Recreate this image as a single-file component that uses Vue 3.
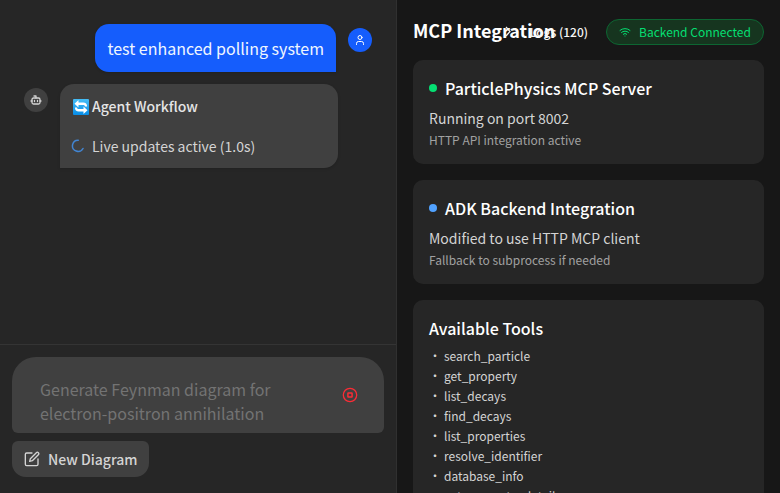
<script setup>
const servers = [
  { title: 'ParticlePhysics MCP Server', detail: 'Running on port 8002', note: 'HTTP API integration active', tone: 'green' },
  { title: 'ADK Backend Integration', detail: 'Modified to use HTTP MCP client', note: 'Fallback to subprocess if needed', tone: 'blue' },
]
const tools = ['search_particle', 'get_property', 'list_decays', 'find_decays', 'list_properties', 'resolve_identifier', 'database_info', 'get_property_details']
</script>

<template>
  <div class="app">
    <section class="chat">
      <div class="messages">
        <div class="row user">
          <div class="bubble mine">test enhanced polling system</div>
          <div class="avatar blue">
            <svg width="12" height="12" viewBox="0 0 24 24" fill="none" stroke="currentColor" stroke-width="2" stroke-linecap="round"><circle cx="12" cy="7" r="4" /><path d="M5 21v-2a4 4 0 0 1 4-4h6a4 4 0 0 1 4 4v2" /></svg>
          </div>
        </div>
        <div class="row agent">
          <div class="avatar">
            <svg width="12" height="12" viewBox="0 0 24 24" fill="none" stroke="currentColor" stroke-width="2.6" stroke-linecap="round" stroke-linejoin="round"><path d="M12 8V4H8" /><rect x="4" y="8" width="16" height="12" rx="3" /><path d="M2 14h2M20 14h2M9 13v2M15 13v2" /></svg>
          </div>
          <div class="bubble reply">
            <div class="workflow">
              <svg width="16" height="16" viewBox="0 0 16 16"><defs><linearGradient id="sky" x2="0" y2="1"><stop stop-color="#46bdf5" /><stop offset="1" stop-color="#078de8" /></linearGradient></defs><rect width="16" height="16" rx="1" fill="url(#sky)" /><path d="M1.500 4.800 5.500 1v2.500h4.700c2.500 0 3.900 1.400 3.900 3.900h-2.200c0-1-.6-1.500-1.700-1.500H5.500v2.600zM14.500 11.200l-4 3.800v-2.500H5.800c-2.500 0-3.900-1.400-3.900-3.900h2.200c0 1 .6 1.500 1.700 1.500h4.700V7.500z" fill="#fff" /></svg>
              <span>Agent Workflow</span>
            </div>
            <div class="live">
              <svg width="14" height="14" viewBox="0 0 14 14" fill="none" stroke="#4285d2" stroke-width="1.5" stroke-linecap="round"><path d="M7.300 1.200A5.600 5.600 0 1 0 12 9.500" /></svg>
              <span>Live updates active (1.0s)</span>
            </div>
          </div>
        </div>
      </div>
      <div class="composer">
        <div class="prompt">
          <div class="placeholder">Generate Feynman diagram for electron-positron annihilation</div>
          <svg class="stop" width="16" height="16" viewBox="0 0 16 16" fill="none" stroke="#fb2c36" stroke-width="1.3"><circle cx="8" cy="8" r="6.700" /><rect x="5.900" y="5.900" width="4.200" height="4.200" rx=".5" stroke-width="1.500" /></svg>
        </div>
        <button class="new">
          <svg width="16" height="16" viewBox="0 0 24 24" fill="none" stroke="currentColor" stroke-width="2" stroke-linecap="round" stroke-linejoin="round"><path d="M12 3H4a2 2 0 0 0-2 2v15a2 2 0 0 0 2 2h15a2 2 0 0 0 2-2v-8" /><path d="M18.500 2.500a2.100 2.100 0 0 1 3 3L12.500 14.500 8.500 15.500l1-4z" /></svg>
          <span>New Diagram</span>
        </button>
      </div>
    </section>
    <aside class="panel">
      <header class="head">
        <h1>MCP Integration</h1>
        <div class="logs">
          <svg width="12" height="12" viewBox="0 0 12 12" fill="none" stroke="currentColor" stroke-width="1.200"><path d="M3 1l4 4.500L3 10" /></svg>
          <span>Logs (120)</span>
        </div>
        <div class="status">
          <svg width="12" height="12" viewBox="0 0 24 24" fill="none" stroke="currentColor" stroke-width="2" stroke-linecap="round"><path d="M12 20h.01M2 8.800a15 15 0 0 1 20 0M5 12.900a10 10 0 0 1 14 0M8.500 16.400a5 5 0 0 1 7 0" /></svg>
          <span>Backend Connected</span>
        </div>
      </header>
      <article v-for="s in servers" :key="s.title" class="card">
        <h2><i class="dot" :class="s.tone"></i>{{ s.title }}</h2>
        <p class="detail">{{ s.detail }}</p>
        <p class="note">{{ s.note }}</p>
      </article>
      <article class="card tools">
        <h2>Available Tools</h2>
        <ul><li v-for="t in tools" :key="t"><span class="bullet">•</span>{{ t }}</li></ul>
      </article>
    </aside>
  </div>
</template>

<style>
body { margin: 0; overflow: hidden; background: #171717; }
</style>

<style scoped>
.app { display: grid; grid-template-columns: 397px 383px; height: 493px; overflow: hidden; font-family: "Noto Sans CJK SC", sans-serif; color: #fff; }
.app * { box-sizing: border-box; }
svg { display: block; flex: none; }
.chat { display: flex; flex-direction: column; background: #262626; border-right: 1px solid #303030; min-height: 0; }
.messages { flex: 1; padding: 24px; display: flex; flex-direction: column; gap: 12px; }
.row { display: flex; align-items: flex-start; gap: 12px; }
.user { justify-content: flex-end; }
.avatar { width: 24px; height: 24px; margin-top: 4px; border-radius: 50%; background: #404040; color: #d4d4d4; display: flex; align-items: center; justify-content: center; flex: none; }
.avatar.blue { background: #155dfc; color: #fff; }
.bubble { box-shadow: 0 1px 3px rgba(0, 0, 0, .15); }
.mine { background: #155dfc; height: 48px; padding: 12px; line-height: 24px; font-size: 16px; border-radius: 14px 14px 0 14px; white-space: nowrap; color: #eff6ff; }
.reply { width: 278px; height: 84px; background: #404040; border-radius: 14px 14px 14px 0; padding: 12px; display: flex; flex-direction: column; gap: 20px; }
.workflow, .live { display: flex; align-items: center; line-height: 20px; font-size: 14px; }
.workflow { gap: 3px; font-weight: 500; color: #e5e5e5; padding-left: 1px; }
.workflow svg { margin-top: 2px; }
.live { gap: 7px; color: #d4d4d4; margin-left: -1px; }
.composer { border-top: 1px solid #343434; height: 149px; padding: 12px; }
.prompt { height: 76px; background: #404040; border-radius: 24px 24px 6px 6px; padding: 20px 26px 8px 28px; display: flex; justify-content: space-between; align-items: center; }
.placeholder { width: 250px; font-size: 16px; line-height: 24px; color: #737373; }
.stop { margin-bottom: 12px; }
.new { margin-top: 8px; border: 0; background: #404040; color: #d4d4d4; height: 36px; width: 137px; border-radius: 6px 6px 14px 14px; padding: 0 12px; display: flex; align-items: center; gap: 8px; font: 500 14px/20px "Noto Sans CJK SC", sans-serif; white-space: nowrap; }
.panel { background: #171717; padding: 16px; display: flex; flex-direction: column; gap: 16px; overflow: hidden; }
.head { position: relative; height: 28px; display: flex; justify-content: space-between; align-items: flex-start; }
h1, h2, p, ul { margin: 0; }
h1 { font-size: 18px; line-height: 28px; font-weight: 700; white-space: nowrap; }
.logs { position: absolute; right: 176px; top: 6px; display: flex; gap: 12px; align-items: center; font-size: 12px; line-height: 20px; color: #f5f5f5; font-weight: 500; }
.logs svg { margin-right: 3px; }
.status { margin-top: 3px; width: 158px; height: 26px; border: 1px solid #0d6632; background: #16351f; color: #05df72; border-radius: 13px; display: flex; align-items: center; padding: 0 12px; gap: 8px; font-size: 12px; line-height: 16px; white-space: nowrap; }
.card { flex: none; height: 104px; background: #262626; border-radius: 10px; padding: 16px; }
h2 { display: flex; align-items: center; gap: 8px; font-size: 16px; line-height: 24px; font-weight: 500; }
.dot { width: 8px; height: 8px; border-radius: 50%; }
.green { background: #05df72; }
.blue { background: #51a2ff; }
.detail { margin-top: 8px; font-size: 14px; line-height: 20px; color: #d4d4d4; }
.note { margin-top: 4px; font-size: 12px; line-height: 16px; color: #a1a1a1; }
.tools { height: 240px; }
ul { padding: 0; margin-top: 6px; list-style: none; }
li { display: flex; font-size: 12px; line-height: 20px; color: #d4d4d4; white-space: nowrap; }
.bullet { width: 15px; }
</style>
